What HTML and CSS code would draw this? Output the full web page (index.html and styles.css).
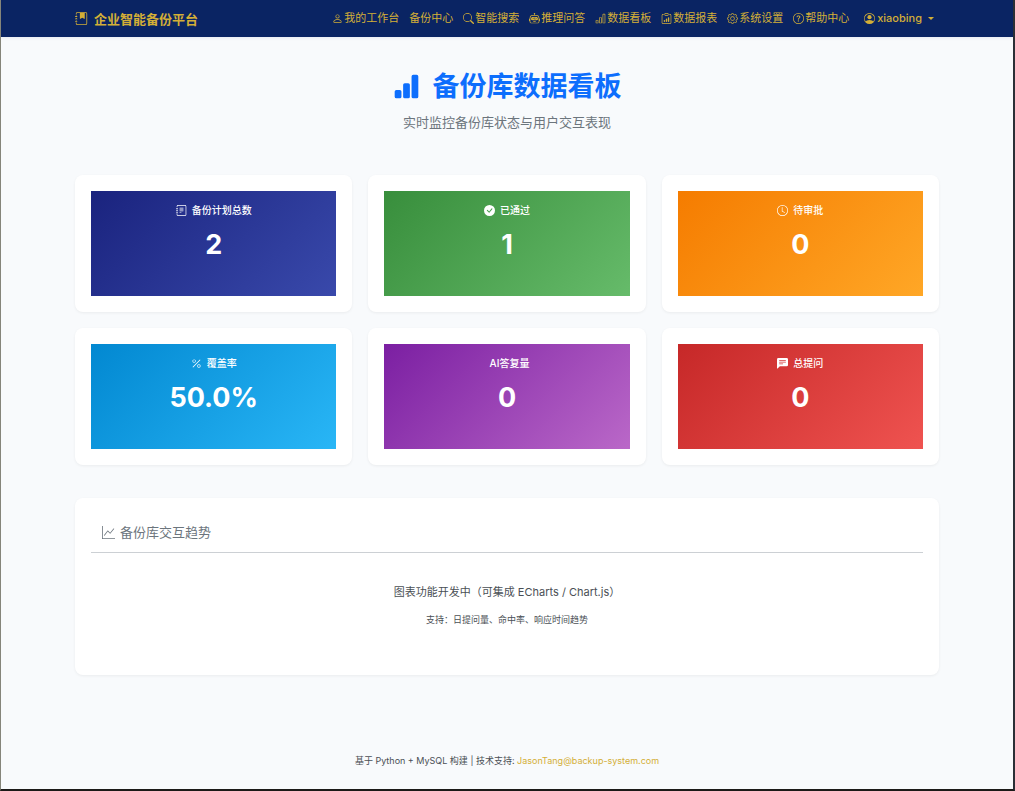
FILE: index.html
```html
<!DOCTYPE html>
<html lang="zh-CN">
<head>
    <meta charset="UTF-8">
    <title>备份库数据看板</title>
    <meta name="viewport" content="width=device-width, initial-scale=1.0">
    <link rel="stylesheet" href="styles.css">
</head>
<body>

    <!-- icons -->
    <svg class="sprite" aria-hidden="true">
        <symbol id="journal-bookmark" viewBox="0 0 16 16">
            <path d="M6 1h6v7a.5.5 0 0 1-.757.429L9 7.083 6.757 8.43A.5.5 0 0 1 6 8z"/>
            <path d="M3 0h10a2 2 0 0 1 2 2v12a2 2 0 0 1-2 2H3a2 2 0 0 1-2-2v-1h1v1a1 1 0 0 0 1 1h10a1 1 0 0 0 1-1V2a1 1 0 0 0-1-1H3a1 1 0 0 0-1 1v1H1V2a2 2 0 0 1 2-2"/>
            <path d="M1 5v-.5a.5.5 0 0 1 1 0V5h.5a.5.5 0 0 1 0 1h-2a.5.5 0 0 1 0-1zm0 3v-.5a.5.5 0 0 1 1 0V8h.5a.5.5 0 0 1 0 1h-2a.5.5 0 0 1 0-1zm0 3v-.5a.5.5 0 0 1 1 0v.5h.5a.5.5 0 0 1 0 1h-2a.5.5 0 0 1 0-1z"/>
        </symbol>
        <symbol id="journal-text" viewBox="0 0 16 16">
            <path d="M5 10.5a.5.5 0 0 1 .5-.5h2a.5.5 0 0 1 0 1h-2a.5.5 0 0 1-.5-.5m0-2a.5.5 0 0 1 .5-.5h5a.5.5 0 0 1 0 1h-5a.5.5 0 0 1-.5-.5m0-2a.5.5 0 0 1 .5-.5h5a.5.5 0 0 1 0 1h-5a.5.5 0 0 1-.5-.5m0-2a.5.5 0 0 1 .5-.5h5a.5.5 0 0 1 0 1h-5a.5.5 0 0 1-.5-.5"/>
            <path d="M3 0h10a2 2 0 0 1 2 2v12a2 2 0 0 1-2 2H3a2 2 0 0 1-2-2v-1h1v1a1 1 0 0 0 1 1h10a1 1 0 0 0 1-1V2a1 1 0 0 0-1-1H3a1 1 0 0 0-1 1v1H1V2a2 2 0 0 1 2-2"/>
            <path d="M1 5v-.5a.5.5 0 0 1 1 0V5h.5a.5.5 0 0 1 0 1h-2a.5.5 0 0 1 0-1zm0 3v-.5a.5.5 0 0 1 1 0V8h.5a.5.5 0 0 1 0 1h-2a.5.5 0 0 1 0-1zm0 3v-.5a.5.5 0 0 1 1 0v.5h.5a.5.5 0 0 1 0 1h-2a.5.5 0 0 1 0-1z"/>
        </symbol>
        <symbol id="person" viewBox="0 0 16 16">
            <path d="M8 8a3 3 0 1 0 0-6 3 3 0 0 0 0 6m2-3a2 2 0 1 1-4 0 2 2 0 0 1 4 0m4 8c0 1-1 1-1 1H3s-1 0-1-1 1-4 6-4 6 3 6 4m-1-.004c-.001-.246-.154-.986-.832-1.664C11.516 10.68 10.289 10 8 10s-3.516.68-4.168 1.332c-.678.678-.83 1.418-.832 1.664z"/>
        </symbol>
        <symbol id="search" viewBox="0 0 16 16">
            <path d="M11.742 10.344a6.5 6.5 0 1 0-1.397 1.398h-.001q.044.06.098.115l3.85 3.85a1 1 0 0 0 1.415-1.414l-3.85-3.85a1 1 0 0 0-.115-.1zM12 6.5a5.5 5.5 0 1 1-11 0 5.5 5.5 0 0 1 11 0"/>
        </symbol>
        <symbol id="robot" viewBox="0 0 16 16">
            <path d="M6 12.5a.5.5 0 0 1 .5-.5h3a.5.5 0 0 1 0 1h-3a.5.5 0 0 1-.5-.5M3 8.062C3 6.76 4.235 5.765 5.53 5.886a26.6 26.6 0 0 0 4.94 0C11.765 5.765 13 6.76 13 8.062v1.157a.93.93 0 0 1-.765.935c-.845.147-2.34.346-4.235.346s-3.39-.2-4.235-.346A.93.93 0 0 1 3 9.219zm4.542-.827a.25.25 0 0 0-.217.068l-.92.9a25 25 0 0 1-1.871-.183.25.25 0 0 0-.068.495c.55.076 1.232.149 2.02.193a.25.25 0 0 0 .189-.071l.754-.736.847 1.71a.25.25 0 0 0 .404.062l.932-.97a25 25 0 0 0 1.922-.188.25.25 0 0 0-.068-.495c-.538.074-1.207.145-1.98.189a.25.25 0 0 0-.166.076l-.754.785-.842-1.7a.25.25 0 0 0-.182-.135"/>
            <path d="M8.5 1.866a1 1 0 1 0-1 0V3h-2A4.5 4.5 0 0 0 1 7.5V8a1 1 0 0 0-1 1v2a1 1 0 0 0 1 1v1a2 2 0 0 0 2 2h10a2 2 0 0 0 2-2v-1a1 1 0 0 0 1-1V9a1 1 0 0 0-1-1v-.5A4.5 4.5 0 0 0 10.5 3h-2zM14 7.5V13a1 1 0 0 1-1 1H3a1 1 0 0 1-1-1V7.5A3.5 3.5 0 0 1 5.5 4h5A3.5 3.5 0 0 1 14 7.5"/>
        </symbol>
        <symbol id="bar-chart" viewBox="0 0 16 16">
            <path d="M4 11H2v3h2zm5-4H7v7h2zm5-5v12h-2V2zm-2-1a1 1 0 0 0-1 1v12a1 1 0 0 0 1 1h2a1 1 0 0 0 1-1V2a1 1 0 0 0-1-1zM6 7a1 1 0 0 1 1-1h2a1 1 0 0 1 1 1v7a1 1 0 0 1-1 1H7a1 1 0 0 1-1-1zm-5 4a1 1 0 0 1 1-1h2a1 1 0 0 1 1 1v3a1 1 0 0 1-1 1H2a1 1 0 0 1-1-1z"/>
        </symbol>
        <symbol id="bar-chart-fill" viewBox="0 0 16 16">
            <path d="M1 11a1 1 0 0 1 1-1h2a1 1 0 0 1 1 1v3a1 1 0 0 1-1 1H2a1 1 0 0 1-1-1zm5-4a1 1 0 0 1 1-1h2a1 1 0 0 1 1 1v7a1 1 0 0 1-1 1H7a1 1 0 0 1-1-1zm5-5a1 1 0 0 1 1-1h2a1 1 0 0 1 1 1v12a1 1 0 0 1-1 1h-2a1 1 0 0 1-1-1z"/>
        </symbol>
        <symbol id="clipboard-data" viewBox="0 0 16 16">
            <path d="M4 11a1 1 0 1 1 2 0v1a1 1 0 1 1-2 0zm6-4a1 1 0 1 1 2 0v5a1 1 0 1 1-2 0zM7 9a1 1 0 0 1 2 0v3a1 1 0 1 1-2 0z"/>
            <path d="M4 1.5H3a2 2 0 0 0-2 2V14a2 2 0 0 0 2 2h10a2 2 0 0 0 2-2V3.5a2 2 0 0 0-2-2h-1v1h1a1 1 0 0 1 1 1V14a1 1 0 0 1-1 1H3a1 1 0 0 1-1-1V3.5a1 1 0 0 1 1-1h1z"/>
            <path d="M9.5 1a.5.5 0 0 1 .5.5v1a.5.5 0 0 1-.5.5h-3a.5.5 0 0 1-.5-.5v-1a.5.5 0 0 1 .5-.5zm-3-1A1.5 1.5 0 0 0 5 1.5v1A1.5 1.5 0 0 0 6.5 4h3A1.5 1.5 0 0 0 11 2.5v-1A1.5 1.5 0 0 0 9.5 0z"/>
        </symbol>
        <symbol id="gear" viewBox="0 0 16 16">
            <path d="M8 4.754a3.246 3.246 0 1 0 0 6.492 3.246 3.246 0 0 0 0-6.492M5.754 8a2.246 2.246 0 1 1 4.492 0 2.246 2.246 0 0 1-4.492 0"/>
            <path d="M9.796 1.343c-.527-1.79-3.065-1.79-3.592 0l-.094.319a.873.873 0 0 1-1.255.52l-.292-.16c-1.64-.892-3.433.902-2.54 2.541l.159.292a.873.873 0 0 1-.52 1.255l-.319.094c-1.79.527-1.79 3.065 0 3.592l.319.094a.873.873 0 0 1 .52 1.255l-.16.292c-.892 1.64.901 3.434 2.541 2.54l.292-.159a.873.873 0 0 1 1.255.52l.094.319c.527 1.79 3.065 1.79 3.592 0l.094-.319a.873.873 0 0 1 1.255-.52l.292.16c1.64.893 3.434-.902 2.54-2.541l-.159-.292a.873.873 0 0 1 .52-1.255l.319-.094c1.79-.527 1.79-3.065 0-3.592l-.319-.094a.873.873 0 0 1-.52-1.255l.16-.292c.893-1.64-.902-3.433-2.541-2.54l-.292.159a.873.873 0 0 1-1.255-.52zm-2.633.283c.246-.835 1.428-.835 1.674 0l.094.319a1.873 1.873 0 0 0 2.693 1.115l.291-.16c.764-.415 1.6.42 1.184 1.185l-.159.292a1.873 1.873 0 0 0 1.116 2.692l.318.094c.835.246.835 1.428 0 1.674l-.319.094a1.873 1.873 0 0 0-1.115 2.693l.16.291c.415.764-.42 1.6-1.185 1.184l-.291-.159a1.873 1.873 0 0 0-2.693 1.116l-.094.318c-.246.835-1.428.835-1.674 0l-.094-.319a1.873 1.873 0 0 0-2.692-1.115l-.292.16c-.764.415-1.6-.42-1.184-1.185l.159-.291A1.873 1.873 0 0 0 1.945 8.93l-.319-.094c-.835-.246-.835-1.428 0-1.674l.319-.094A1.873 1.873 0 0 0 3.06 4.377l-.16-.292c-.415-.764.42-1.6 1.185-1.184l.292.159a1.873 1.873 0 0 0 2.692-1.115z"/>
        </symbol>
        <symbol id="question-circle" viewBox="0 0 16 16">
            <path d="M8 15A7 7 0 1 1 8 1a7 7 0 0 1 0 14m0 1A8 8 0 1 0 8 0a8 8 0 0 0 0 16"/>
            <path d="M5.255 5.786a.237.237 0 0 0 .241.247h.825c.138 0 .248-.113.266-.25.09-.656.54-1.134 1.342-1.134.686 0 1.314.343 1.314 1.168 0 .635-.374.927-.965 1.371-.673.489-1.206 1.06-1.168 1.987l.003.217a.25.25 0 0 0 .25.246h.811a.25.25 0 0 0 .25-.25v-.105c0-.718.273-.927 1.01-1.486.609-.463 1.244-.977 1.244-2.056 0-1.511-1.276-2.241-2.673-2.241-1.267 0-2.655.59-2.75 2.286m1.557 5.763c0 .533.425.927 1.01.927.609 0 1.028-.394 1.028-.927 0-.552-.42-.94-1.029-.94-.584 0-1.009.388-1.009.94"/>
        </symbol>
        <symbol id="person-circle" viewBox="0 0 16 16">
            <path d="M11 6a3 3 0 1 1-6 0 3 3 0 0 1 6 0"/>
            <path fill-rule="evenodd" d="M0 8a8 8 0 1 1 16 0A8 8 0 0 1 0 8m8-7a7 7 0 0 0-5.468 11.37C3.242 11.226 4.805 10 8 10s4.757 1.225 5.468 2.37A7 7 0 0 0 8 1"/>
        </symbol>
        <symbol id="check-circle-fill" viewBox="0 0 16 16">
            <path d="M16 8A8 8 0 1 1 0 8a8 8 0 0 1 16 0m-3.97-3.03a.75.75 0 0 0-1.08.022L7.477 9.417 5.384 7.323a.75.75 0 0 0-1.06 1.06L6.97 11.03a.75.75 0 0 0 1.079-.02l3.992-4.99a.75.75 0 0 0-.01-1.05z"/>
        </symbol>
        <symbol id="clock" viewBox="0 0 16 16">
            <path d="M8 3.5a.5.5 0 0 0-1 0V9a.5.5 0 0 0 .252.434l3.5 2a.5.5 0 0 0 .496-.868L8 8.71z"/>
            <path d="M8 16A8 8 0 1 0 8 0a8 8 0 0 0 0 16m7-8A7 7 0 1 1 1 8a7 7 0 0 1 14 0"/>
        </symbol>
        <symbol id="percent" viewBox="0 0 16 16">
            <path d="M13.442 2.558a.625.625 0 0 1 0 .884l-10 10a.625.625 0 1 1-.884-.884l10-10a.625.625 0 0 1 .884 0M4.5 6a1.5 1.5 0 1 1 0-3 1.5 1.5 0 0 1 0 3m0 1a2.5 2.5 0 1 0 0-5 2.5 2.5 0 0 0 0 5m7 6a1.5 1.5 0 1 1 0-3 1.5 1.5 0 0 1 0 3m0 1a2.5 2.5 0 1 0 0-5 2.5 2.5 0 0 0 0 5"/>
        </symbol>
        <symbol id="chat-left-text-fill" viewBox="0 0 16 16">
            <path d="M0 2a2 2 0 0 1 2-2h12a2 2 0 0 1 2 2v8a2 2 0 0 1-2 2H4.414a1 1 0 0 0-.707.293L.854 15.146A.5.5 0 0 1 0 14.793zm3.5 1a.5.5 0 0 0 0 1h9a.5.5 0 0 0 0-1zm0 2.5a.5.5 0 0 0 0 1h9a.5.5 0 0 0 0-1zm0 2.5a.5.5 0 0 0 0 1h5a.5.5 0 0 0 0-1z"/>
        </symbol>
        <symbol id="graph-up" viewBox="0 0 16 16">
            <path fill-rule="evenodd" d="M0 0h1v15h15v1H0zm14.817 3.113a.5.5 0 0 1 .07.704l-4.5 5.5a.5.5 0 0 1-.74.037L7.06 6.767l-3.656 5.027a.5.5 0 0 1-.808-.588l4-5.5a.5.5 0 0 1 .758-.06l2.609 2.61 4.15-5.073a.5.5 0 0 1 .704-.07"/>
        </symbol>
    </svg>

    <nav class="navbar">
        <div class="container navbar-inner">
            <a class="brand" href="#"><svg class="icon"><use href="#journal-bookmark"/></svg>企业智能备份平台</a>
            <div class="nav-links">
                <a href="#"><svg class="icon"><use href="#person"/></svg>我的工作台</a>
                <a href="#">备份中心</a>
                <a href="#"><svg class="icon"><use href="#search"/></svg>智能搜索</a>
                <a href="#"><svg class="icon"><use href="#robot"/></svg>推理问答</a>
                <a href="#"><svg class="icon"><use href="#bar-chart"/></svg>数据看板</a>
                <a href="#"><svg class="icon"><use href="#clipboard-data"/></svg>数据报表</a>
                <a href="#"><svg class="icon"><use href="#gear"/></svg>系统设置</a>
                <a href="#"><svg class="icon"><use href="#question-circle"/></svg>帮助中心</a>
                <button class="user-menu" type="button"><svg class="icon"><use href="#person-circle"/></svg>xiaobing<span class="caret"></span></button>
            </div>
        </div>
    </nav>

    <main class="container">
        <header class="page-header">
            <h1><svg class="icon"><use href="#bar-chart-fill"/></svg>备份库数据看板</h1>
            <p>实时监控备份库状态与用户交互表现</p>
        </header>

        <section class="stats">
            <div class="card">
                <div class="tile tile-indigo">
                    <h2><svg class="icon"><use href="#journal-text"/></svg>备份计划总数</h2>
                    <p>2</p>
                </div>
            </div>
            <div class="card">
                <div class="tile tile-green">
                    <h2><svg class="icon"><use href="#check-circle-fill"/></svg>已通过</h2>
                    <p>1</p>
                </div>
            </div>
            <div class="card">
                <div class="tile tile-orange">
                    <h2><svg class="icon"><use href="#clock"/></svg>待审批</h2>
                    <p>0</p>
                </div>
            </div>
            <div class="card">
                <div class="tile tile-blue">
                    <h2><svg class="icon"><use href="#percent"/></svg>覆盖率</h2>
                    <p>50.0%</p>
                </div>
            </div>
            <div class="card">
                <div class="tile tile-purple">
                    <h2><i></i>AI答复量</h2>
                    <p>0</p>
                </div>
            </div>
            <div class="card">
                <div class="tile tile-red">
                    <h2><svg class="icon"><use href="#chat-left-text-fill"/></svg>总提问</h2>
                    <p>0</p>
                </div>
            </div>
        </section>

        <section class="card trend">
            <h2><svg class="icon"><use href="#graph-up"/></svg>备份库交互趋势</h2>
            <div class="trend-body">
                <p>图表功能开发中（可集成 ECharts / Chart.js）</p>
                <small>支持：日提问量、命中率、响应时间趋势</small>
            </div>
        </section>
    </main>

    <footer class="footer">
        <p>基于 Python + MySQL 构建 | 技术支持: <a href="mailto:JasonTang@backup-system.com">JasonTang@backup-system.com</a></p>
    </footer>

</body>
</html>
```
FILE: styles.css
```css
* {
    box-sizing: border-box;
}
body {
    margin: 0;
    min-height: 100vh;
    font-family: Inter, "Noto Sans CJK SC", sans-serif;
    font-size: 11px;
    line-height: 16px;
    color: #4a4f55;
    background-color: #f8fafc;
    border-left: 1px solid #85857a;
    border-right: 2px solid #2b2f36;
    border-bottom: 2px solid #1c1a18;
}
h1, h2, p {
    margin: 0;
}
a {
    color: #d4af37;
    text-decoration: none;
}
.sprite {
    display: none;
}
.icon {
    width: 1em;
    height: 1em;
    flex-shrink: 0;
    fill: currentColor;
}
.container {
    max-width: 880px;
    margin: 0 auto;
    padding: 0 8px;
}

/* Navbar */
.navbar {
    background-color: #0a2463;
    box-shadow: 0 1px 3px rgba(10, 36, 99, 0.08);
}
.navbar-inner {
    display: flex;
    align-items: center;
    justify-content: space-between;
    min-height: 37px;
}
.brand {
    display: flex;
    align-items: center;
    gap: 6px;
    font-size: 13px;
    font-weight: 600;
}
.nav-links {
    display: flex;
    align-items: center;
    padding-bottom: 1px;
}
.nav-links a, .user-menu {
    display: flex;
    align-items: center;
    gap: 2px;
    padding: 0 5px;
    white-space: nowrap;
}
.nav-links a {
    gap: 1px;
}
.user-menu {
    margin-left: 5px;
    border: 0;
    background: none;
    color: #d4af37;
    font: inherit;
    font-weight: 500;
    cursor: pointer;
}
.caret {
    margin-left: 4px;
    border-top: 3px solid;
    border-left: 3px solid transparent;
    border-right: 3px solid transparent;
}

/* Page title */
.page-header {
    padding: 34px 0 43px;
    text-align: center;
}
.page-header h1 {
    display: flex;
    align-items: center;
    justify-content: center;
    gap: 13px;
    font-size: 27px;
    line-height: 32px;
    font-weight: 700;
    color: #0d6efd;
}
.page-header h1 .icon {
    margin-bottom: 2px;
}
.page-header p {
    margin-top: 9px;
    font-size: 13px;
    line-height: 20px;
    color: #6c757d;
}

/* Stat cards */
.stats {
    display: grid;
    grid-template-columns: repeat(3, 1fr);
    gap: 16px;
}
.card {
    padding: 16px;
    background-color: #fff;
    border-radius: 8px;
    box-shadow: 0 1px 3px rgba(0, 0, 0, 0.06);
}
.tile {
    padding: 11px 11px 35px;
    color: #fff;
    text-align: center;
}
.tile h2 {
    display: flex;
    align-items: center;
    justify-content: center;
    gap: 5px;
    font-size: 10px;
    line-height: 16px;
    font-weight: 500;
}
.tile h2 .icon {
    width: 11px;
    height: 11px;
}
.tile p {
    margin-top: 10px;
    font-size: 27px;
    line-height: 33px;
    font-weight: 700;
}
.tile-indigo { background: linear-gradient(135deg, #1a237e, #3949ab); }
.tile-green { background: linear-gradient(135deg, #388e3c, #66bb6a); }
.tile-orange { background: linear-gradient(135deg, #f57c00, #ffa726); }
.tile-blue { background: linear-gradient(135deg, #0288d1, #29b6f6); }
.tile-purple { background: linear-gradient(135deg, #7b1fa2, #ba68c8); }
.tile-red { background: linear-gradient(135deg, #c62828, #ef5350); }

/* Trend */
.trend {
    margin-top: 33px;
}
.trend h2 {
    display: flex;
    align-items: center;
    gap: 5px;
    padding: 8px 11px 10px;
    border-bottom: 1px solid #ccd0d4;
    font-size: 13px;
    line-height: 20px;
    font-weight: 400;
    color: #6c757d;
}
.trend-body {
    padding: 31px 0;
    text-align: center;
}
.trend-body p {
    margin-bottom: 12px;
}
.trend-body small {
    display: block;
    font-size: 9px;
}

/* Footer */
.footer {
    padding: 78px 8px 20px;
    text-align: center;
    font-size: 9px;
}

@media (max-width: 700px) {
    .navbar-inner, .nav-links {
        flex-wrap: wrap;
    }
    .stats {
        grid-template-columns: 1fr;
    }
}
```
